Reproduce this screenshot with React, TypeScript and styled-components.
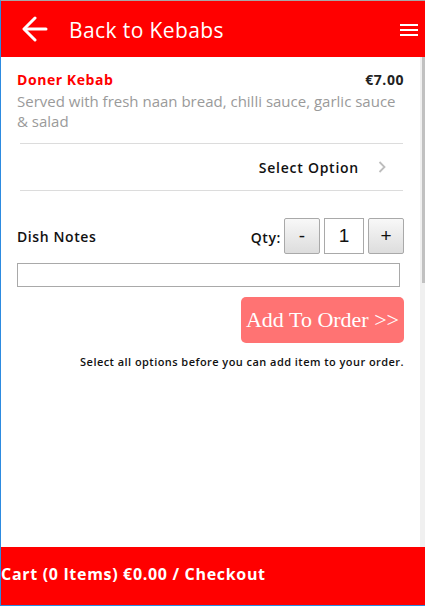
import React from "react";
import styled, { createGlobalStyle } from "styled-components";

const Global = createGlobalStyle`
  html, body { margin: 0; padding: 0; }
  body { font-family: "Open Sans", sans-serif; background: #fff; }
  * { box-sizing: border-box; }
`;

const Frame = styled.div`
  width: 425px;
  height: 606px;
  display: flex;
  flex-direction: column;
  border-top: 1px solid #a7a7a7;
  border-left: 1px solid #2d8be0;
  border-bottom: 1px solid #2d8be0;
  overflow: hidden;
`;

const Header = styled.header`
  height: 56px;
  flex: none;
  background: #ff0000;
  display: flex;
  align-items: center;
  padding: 0 7px 0 21px;
  color: #fff;
`;

const Title = styled.div`
  flex: 1;
  margin-left: 21px;
  font-size: 21px;
  font-weight: 400;
  letter-spacing: 0.4px;
  padding-top: 1px;
`;

const Burger = styled.div`
  width: 18px;
  display: flex;
  flex-direction: column;
  gap: 3px;
  margin-top: 1px;
  span { display: block; height: 2px; background: #fff; }
`;

const Body = styled.div`
  flex: 1;
  display: flex;
  overflow: hidden;
`;

const Content = styled.main`
  flex: 1;
  padding: 14px 16px 0 16px;
`;

const ScrollTrack = styled.div`
  width: 5px;
  flex: none;
  background: #f0f0f0;
  display: flex;
  justify-content: flex-end;
`;

const ScrollThumb = styled.div`
  width: 3px;
  height: 226px;
  background: #c1c1c1;
`;

const ItemHead = styled.div`
  display: flex;
  justify-content: space-between;
  align-items: baseline;
  font-size: 14px;
  font-weight: 700;
  line-height: 18px;
  letter-spacing: 0.55px;
`;

const ItemName = styled.span`
  color: #ff0000;
`;

const Price = styled.span`
  color: #222;
`;

const Desc = styled.p`
  margin: 2px 0 0;
  color: #9a9a9a;
  font-size: 15px;
  line-height: 20px;
  max-width: 386px;
`;

const OptionRow = styled.div`
  margin: 12px 1px 0 3px;
  border-top: 1px solid #dcdcdc;
  border-bottom: 1px solid #dcdcdc;
  height: 48px;
  display: flex;
  align-items: center;
  justify-content: flex-end;
  padding-right: 17px;
  gap: 19px;
  font-size: 14px;
  font-weight: 600;
  letter-spacing: 0.75px;
  color: #111;
`;

const QtyRow = styled.div`
  margin-top: 27px;
  display: flex;
  align-items: center;
`;

const Label = styled.span`
  font-size: 14px;
  font-weight: 600;
  letter-spacing: 0.6px;
  color: #111;
`;

const Spacer = styled.div`
  flex: 1;
`;

const QtyLabel = styled(Label)`
  margin-right: 3px;
  margin-top: 2px;
`;

const QtyButton = styled.button`
  width: 36px;
  height: 36px;
  border: 1px solid #a9a9a9;
  border-radius: 2px;
  background: linear-gradient(#f8f8f8, #dddddd);
  font-family: "Liberation Sans", Arial, sans-serif;
  font-size: 19px;
  color: #111;
  padding: 0;
`;

const QtyInput = styled.div`
  width: 40px;
  height: 36px;
  margin: 0 4px;
  border: 1px solid #a9a9a9;
  display: flex;
  align-items: center;
  justify-content: center;
  font-family: "Liberation Sans", Arial, sans-serif;
  font-size: 19px;
  color: #111;
`;

const Notes = styled.div`
  margin-top: 9px;
  width: 383px;
  height: 24px;
  border: 1px solid #a9a9a9;
`;

const ActionRow = styled.div`
  margin-top: 10px;
  display: flex;
  justify-content: flex-end;
`;

const AddButton = styled.div`
  width: 163px;
  height: 46px;
  border-radius: 5px;
  background: #ff7373;
  color: #fff;
  font-family: "Liberation Serif", "Times New Roman", serif;
  font-size: 22px;
  display: flex;
  align-items: center;
  justify-content: center;
`;

const Hint = styled.div`
  margin-top: 11px;
  text-align: right;
  font-size: 11px;
  font-weight: 600;
  letter-spacing: 0.45px;
  color: #111;
`;

const Footer = styled.footer`
  height: 58px;
  flex: none;
  background: #ff0000;
  display: flex;
  align-items: center;
  padding: 0 0 4px 0;
  color: #fff;
  font-size: 16px;
  font-weight: 700;
  letter-spacing: 0.68px;
`;

export default function App() {
  return (
    <>
      <Global />
      <Frame>
        <Header>
          <svg width="26" height="26" viewBox="0 0 26 26" fill="none" stroke="#fff" strokeWidth="3" strokeLinecap="round" strokeLinejoin="round">
            <path d="M24 13H3" />
            <path d="M13 2L2 13l11 11" />
          </svg>
          <Title>Back to Kebabs</Title>
          <Burger>
            <span />
            <span />
            <span />
          </Burger>
        </Header>
        <Body>
          <Content>
            <ItemHead>
              <ItemName>Doner Kebab</ItemName>
              <Price>€7.00</Price>
            </ItemHead>
            <Desc>Served with fresh naan bread, chilli sauce, garlic sauce &amp; salad</Desc>
            <OptionRow>
              <span>Select Option</span>
              <svg width="8" height="12" viewBox="0 0 8 12" fill="none" stroke="#bdbdbd" strokeWidth="1.8">
                <path d="M1.5 1l5 5-5 5" />
              </svg>
            </OptionRow>
            <QtyRow>
              <Label>Dish Notes</Label>
              <Spacer />
              <QtyLabel>Qty:</QtyLabel>
              <QtyButton>-</QtyButton>
              <QtyInput>1</QtyInput>
              <QtyButton>+</QtyButton>
            </QtyRow>
            <Notes />
            <ActionRow>
              <AddButton>Add To Order &gt;&gt;</AddButton>
            </ActionRow>
            <Hint>Select all options before you can add item to your order.</Hint>
          </Content>
          <ScrollTrack>
            <ScrollThumb />
          </ScrollTrack>
        </Body>
        <Footer>Cart (0 Items) €0.00 / Checkout</Footer>
      </Frame>
    </>
  );
}
